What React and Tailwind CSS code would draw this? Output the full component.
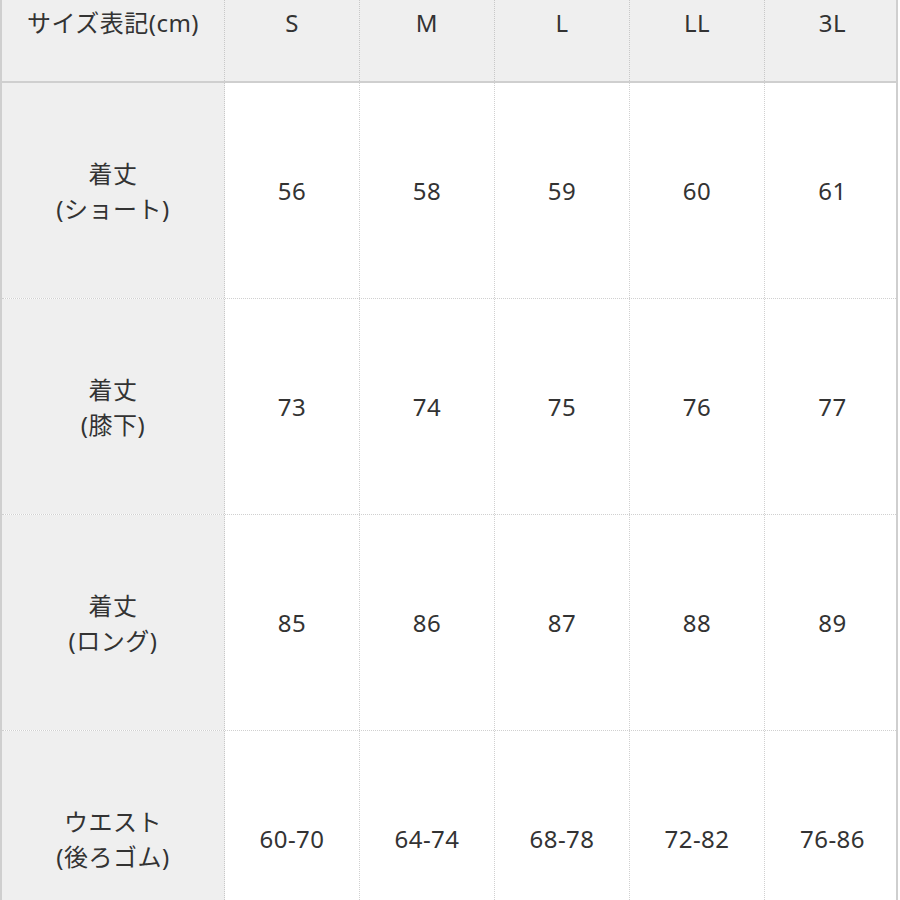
import React from "react";

const sizes = ["S", "M", "L", "LL", "3L"];
const rows = [
  { label: ["着丈", "(ショート)"], vals: ["56", "58", "59", "60", "61"] },
  { label: ["着丈", "(膝下)"], vals: ["73", "74", "75", "76", "77"] },
  { label: ["着丈", "(ロング)"], vals: ["85", "86", "87", "88", "89"] },
  { label: ["ウエスト", "(後ろゴム)"], vals: ["60-70", "64-74", "68-78", "72-82", "76-86"] },
];

export default function App() {
  return (
    <div
      className="w-[900px] h-[900px] overflow-hidden bg-white text-[#333] text-[24px] tracking-[0.5px]"
      style={{ fontFamily: '"Noto Sans", "Noto Sans CJK JP", sans-serif' }}
    >
      <div className="border-l-2 border-r-2 border-[#cfcfcf] w-[898px]">
        <div className="flex h-[81px] bg-[#efefef]">
          <div className="w-[223px] shrink-0 border-r border-dotted border-[#c8c8c8] flex justify-center pt-[5px]">
            サイズ表記(cm)
          </div>
          {sizes.map((s, i) => (
            <div
              key={s}
              className={`w-[135px] shrink-0 flex justify-center pt-[5px] ${i < 4 ? "border-r border-dotted border-[#c8c8c8]" : ""}`}
            >
              {s}
            </div>
          ))}
        </div>
        <div className="h-[2px] bg-[#cfcfcf]" />
        {rows.map((r, ri) => (
          <div key={ri} className="flex h-[216px] border-b border-dotted border-[#d0d0d0]">
            <div className="w-[223px] shrink-0 bg-[#efefef] border-r border-dotted border-[#c8c8c8] flex flex-col items-center justify-center leading-[35px]">
              <div>{r.label[0]}</div>
              <div>{r.label[1]}</div>
            </div>
            {r.vals.map((v, i) => (
              <div
                key={i}
                className={`w-[135px] shrink-0 flex items-center justify-center ${i < 4 ? "border-r border-dotted border-[#d0d0d0]" : ""}`}
              >
                {v}
              </div>
            ))}
          </div>
        ))}
      </div>
    </div>
  );
}
